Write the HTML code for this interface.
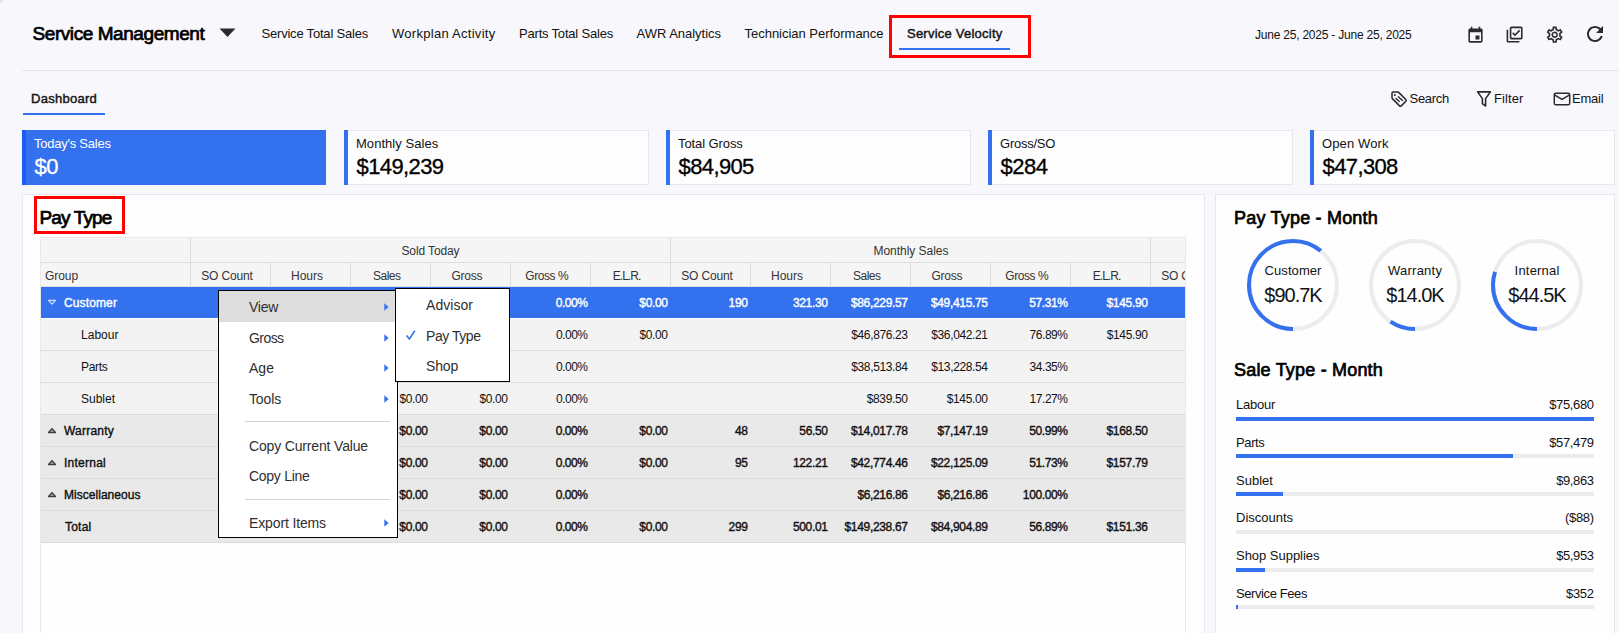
<!DOCTYPE html><html><head><meta charset="utf-8"><title>Service Velocity</title><style>
html,body{margin:0;padding:0}body{width:1619px;height:633px;overflow:hidden;position:relative;background:#f7f7fc;font-family:"Liberation Sans",sans-serif;color:#121212}
div,span,svg{position:absolute;box-sizing:border-box}.t{white-space:nowrap;line-height:1}
</style></head><body>
<div style="left:0px;top:0px;width:8px;height:8px;background:#e4e4ea;"></div>
<div style="left:0px;top:0px;width:9px;height:9px;background:#f7f7fc;border-top-left-radius:6px;"></div>
<span class="t" style="left:32.5px;top:23.85px;font-size:19px;-webkit-text-stroke:0.72px;color:#000;letter-spacing:-0.43px;">Service Management</span>
<svg style="left:219px;top:28px" width="17" height="10" viewBox="0 0 17 10"><path d="M0.5 0.5h16L8.5 9z" fill="#2b2b2b"/></svg>
<span class="t" style="left:261.5px;top:26.95px;font-size:13px;letter-spacing:-0.201px;">Service Total Sales</span>
<span class="t" style="left:392px;top:26.95px;font-size:13px;letter-spacing:0.279px;">Workplan Activity</span>
<span class="t" style="left:519px;top:26.95px;font-size:13px;letter-spacing:-0.195px;">Parts Total Sales</span>
<span class="t" style="left:636.5px;top:26.95px;font-size:13px;letter-spacing:-0.02px;">AWR Analytics</span>
<span class="t" style="left:744.5px;top:26.95px;font-size:13px;letter-spacing:-0.021px;">Technician Performance</span>
<span class="t" style="left:907px;top:26.95px;font-size:13px;-webkit-text-stroke:0.42px;letter-spacing:0.233px;">Service Velocity</span>
<div style="left:899px;top:48px;width:111px;height:2px;background:#3471ee;"></div>
<div style="left:889px;top:15px;width:142px;height:43px;background:transparent;border:3px solid #ff0000;"></div>
<span class="t" style="left:1255px;top:28.8px;font-size:12px;letter-spacing:-0.217px;">June 25, 2025 - June 25, 2025</span>
<svg style="left:1465.600px;top:25.500px" width="19" height="19" viewBox="0 0 24 24"><path fill="#2b2b2b" d="M17 12h-5v5h5v-5zM16 1v2H8V1H6v2H5c-1.11 0-1.99.9-1.99 2L3 19c0 1.1.89 2 2 2h14c1.1 0 2-.9 2-2V5c0-1.1-.9-2-2-2h-1V1h-2zm3 18H5V8h14v11z"/></svg>
<svg style="left:1505.400px;top:24.700px" width="19.200" height="19.200" viewBox="0 0 24 24"><path fill="#2b2b2b" d="M20 4v12H8V4h12m0-2H8c-1.1 0-2 .9-2 2v12c0 1.1.9 2 2 2h12c1.1 0 2-.9 2-2V4c0-1.1-.9-2-2-2zm-7.530 12L9 10.500l1.400-1.410 2.070 2.080L17.600 6 19 7.410 12.470 14zM4 6H2v14c0 1.100.9 2 2 2h14v-2H4V6z"/></svg>
<svg style="left:1545.400px;top:24.500px" width="19.400" height="19.400" viewBox="0 0 24 24"><path fill="#2b2b2b" d="M19.43 12.98c.04-.32.07-.64.07-.98 0-.34-.03-.66-.07-.98l2.11-1.65c.19-.15.24-.42.12-.64l-2-3.46c-.09-.16-.26-.25-.44-.25-.06 0-.12.01-.17.03l-2.49 1c-.52-.4-1.08-.73-1.69-.98l-.38-2.65C14.46 2.18 14.25 2 14 2h-4c-.25 0-.46.18-.49.42l-.38 2.65c-.61.25-1.170.59-1.69.98l-2.49-1c-.06-.02-.12-.03-.18-.03-.17 0-.34.09-.43.25l-2 3.46c-.13.22-.07.49.12.64l2.11 1.65c-.04.32-.07.65-.07.98 0 .33.03.66.07.98l-2.11 1.65c-.19.15-.24.42-.12.64l2 3.46c.09.16.26.25.44.25.06 0 .12-.01.17-.03l2.49-1c.52.4 1.080.73 1.69.98l.38 2.65c.03.24.24.42.49.42h4c.25 0 .46-.18.49-.42l.38-2.65c.61-.25 1.170-.59 1.69-.98l2.49 1c.06.02.12.03.18.03.17 0 .34-.09.43-.25l2-3.46c.12-.22.07-.49-.12-.64l-2.11-1.65zm-1.98-1.710c.04.31.05.52.05.73 0 .21-.02.43-.05.73l-.14 1.130.89.7 1.080.84-.7 1.210-1.270-.51-1.040-.42-.9.68c-.43.32-.84.56-1.250.73l-1.060.43-.16 1.130-.2 1.350h-1.400l-.19-1.350-.16-1.130-1.060-.43c-.43-.18-.83-.41-1.230-.71l-.91-.7-1.060.43-1.270.51-.7-1.210 1.080-.84.89-.7-.14-1.130c-.03-.31-.05-.54-.05-.74s.02-.43.05-.73l.14-1.130-.89-.7-1.080-.84.7-1.210 1.270.51 1.040.42.9-.68c.43-.32.84-.56 1.250-.73l1.060-.43.16-1.130.2-1.350h1.390l.19 1.350.16 1.130 1.060.43c.43.18.83.41 1.230.71l.91.7 1.060-.43 1.270-.51.7 1.210-1.070.85-.89.7.14 1.130zM12 8c-2.210 0-4 1.790-4 4s1.790 4 4 4 4-1.790 4-4-1.790-4-4-4zm0 6c-1.100 0-2-.9-2-2s.9-2 2-2 2 .9 2 2-.9 2-2 2z"/></svg>
<svg style="left:1583px;top:22px" width="24" height="24" viewBox="0 0 24 24"><path fill="#2b2b2b" d="M17.65 6.35C16.2 4.9 14.21 4 12 4c-4.42 0-7.990 3.580-7.990 8s3.570 8 7.990 8c3.730 0 6.840-2.550 7.730-6h-2.080c-.82 2.330-3.040 4-5.650 4-3.310 0-6-2.690-6-6s2.690-6 6-6c1.660 0 3.140.69 4.220 1.780L13 11h7V4l-2.350 2.350z"/></svg>
<div style="left:22px;top:70px;width:1597px;height:1px;background:#e4e4ec;"></div>
<span class="t" style="left:31px;top:91.95px;font-size:13px;-webkit-text-stroke:0.42px;letter-spacing:0.266px;">Dashboard</span>
<div style="left:23px;top:113px;width:82px;height:2px;background:#3471ee;"></div>
<svg style="left:1390.4px;top:89.800px" width="18" height="18" viewBox="0 0 18 18"><path d="M2 3.2a1.200 1.200 0 0 1 1.200-1.200h4.600a1.200 1.200 0 0 1 .85.35l7.200 7.200a1.200 1.200 0 0 1 0 1.700l-4.600 4.600a1.200 1.200 0 0 1-1.700 0l-7.200-7.200A1.200 1.200 0 0 1 2 7.800z" fill="none" stroke="#2b2b2b" stroke-width="1.500"/><circle cx="4.800" cy="4.900" r="1" fill="#2b2b2b"/><path d="M6 8.500l3.200 3M8.300 6.700l4.200 3.800" stroke="#2b2b2b" stroke-width="1.300" stroke-linecap="round"/></svg>
<span class="t" style="left:1409.5px;top:91.95px;font-size:13px;letter-spacing:-0.284px;">Search</span>
<svg style="left:1476px;top:90px" width="16" height="18" viewBox="0 0 16 18"><path d="M1.600 1.900h12.800L9.600 8.600v7.400L6.400 13.600V8.600z" fill="none" stroke="#2b2b2b" stroke-width="1.600" stroke-linejoin="round"/></svg>
<span class="t" style="left:1494px;top:91.95px;font-size:13px;letter-spacing:0.102px;">Filter</span>
<svg style="left:1553px;top:92px" width="18" height="14" viewBox="0 0 18 14"><rect x="1.300" y="1.200" width="15.400" height="11.600" rx="1.600" fill="none" stroke="#2b2b2b" stroke-width="1.500"/><path d="M1.800 3.200l7.200 4.300 7.200-4.300" fill="none" stroke="#2b2b2b" stroke-width="1.500"/></svg>
<span class="t" style="left:1572px;top:91.95px;font-size:13px;letter-spacing:-0.203px;">Email</span>
<div style="left:22px;top:130px;width:304px;height:55px;background:#3471ee;"></div>
<div style="left:22px;top:130px;width:4px;height:55px;background:#1c5cf2;"></div>
<span class="t" style="left:34px;top:136.95px;font-size:13px;color:#ffffff;letter-spacing:-0.239px;">Today's Sales</span>
<span class="t" style="left:34.6px;top:156.3px;font-size:22px;-webkit-text-stroke:0.31px;color:#ffffff;letter-spacing:-0.516px;">$0</span>
<div style="left:344px;top:130px;width:305px;height:55px;background:#fdfdfe;border:1px solid #e7e7ef;"></div>
<div style="left:344px;top:130px;width:4px;height:55px;background:#3471ee;"></div>
<span class="t" style="left:356px;top:136.95px;font-size:13px;letter-spacing:0.042px;">Monthly Sales</span>
<span class="t" style="left:356.6px;top:156.3px;font-size:22px;-webkit-text-stroke:0.31px;color:#000000;letter-spacing:-0.614px;">$149,239</span>
<div style="left:666px;top:130px;width:305px;height:55px;background:#fdfdfe;border:1px solid #e7e7ef;"></div>
<div style="left:666px;top:130px;width:4px;height:55px;background:#3471ee;"></div>
<span class="t" style="left:678px;top:136.95px;font-size:13px;letter-spacing:-0.095px;">Total Gross</span>
<span class="t" style="left:678.6px;top:156.3px;font-size:22px;-webkit-text-stroke:0.31px;color:#000000;letter-spacing:-0.629px;">$84,905</span>
<div style="left:988px;top:130px;width:305px;height:55px;background:#fdfdfe;border:1px solid #e7e7ef;"></div>
<div style="left:988px;top:130px;width:4px;height:55px;background:#3471ee;"></div>
<span class="t" style="left:1000px;top:136.95px;font-size:13px;letter-spacing:-0.235px;">Gross/SO</span>
<span class="t" style="left:1000.6px;top:156.3px;font-size:22px;-webkit-text-stroke:0.31px;color:#000000;letter-spacing:-0.512px;">$284</span>
<div style="left:1310px;top:130px;width:305px;height:55px;background:#fdfdfe;border:1px solid #e7e7ef;"></div>
<div style="left:1310px;top:130px;width:4px;height:55px;background:#3471ee;"></div>
<span class="t" style="left:1322px;top:136.95px;font-size:13px;letter-spacing:0.132px;">Open Work</span>
<span class="t" style="left:1322.6px;top:156.3px;font-size:22px;-webkit-text-stroke:0.31px;color:#000000;letter-spacing:-0.629px;">$47,308</span>
<div style="left:22px;top:194px;width:1183px;height:460px;background:#fefefe;border:1px solid #e7e7ef;"></div>
<span class="t" style="left:39.5px;top:207.85px;font-size:19px;-webkit-text-stroke:0.72px;color:#000;letter-spacing:-0.859px;">Pay Type</span>
<div style="left:34px;top:196px;width:91px;height:38px;background:transparent;border:3px solid #ff0000;"></div>
<div style="left:40px;top:237px;width:1146px;height:420px;background:#fefefe;border:1px solid #e8e8e8;"></div>
<div style="left:41px;top:238px;width:1144px;height:49px;background:#f5f5f5;"></div>
<div style="left:41px;top:262px;width:1144px;height:1px;background:#dddddd;"></div>
<div style="left:41px;top:286px;width:1144px;height:1px;background:#dddddd;"></div>
<div style="left:190px;top:238px;width:1px;height:49px;background:#dddddd;"></div>
<div style="left:670px;top:238px;width:1px;height:49px;background:#dddddd;"></div>
<div style="left:1150px;top:238px;width:1px;height:49px;background:#dddddd;"></div>
<div style="left:270px;top:263px;width:1px;height:24px;background:#dddddd;"></div>
<div style="left:350px;top:263px;width:1px;height:24px;background:#dddddd;"></div>
<div style="left:430px;top:263px;width:1px;height:24px;background:#dddddd;"></div>
<div style="left:510px;top:263px;width:1px;height:24px;background:#dddddd;"></div>
<div style="left:590px;top:263px;width:1px;height:24px;background:#dddddd;"></div>
<div style="left:750px;top:263px;width:1px;height:24px;background:#dddddd;"></div>
<div style="left:830px;top:263px;width:1px;height:24px;background:#dddddd;"></div>
<div style="left:910px;top:263px;width:1px;height:24px;background:#dddddd;"></div>
<div style="left:990px;top:263px;width:1px;height:24px;background:#dddddd;"></div>
<div style="left:1070px;top:263px;width:1px;height:24px;background:#dddddd;"></div>
<span class="t" style="left:401.44px;top:244.8px;font-size:12px;color:#333333;letter-spacing:-0.116px;">Sold Today</span>
<span class="t" style="left:873.49px;top:244.8px;font-size:12px;color:#333333;letter-spacing:-0.029px;">Monthly Sales</span>
<span class="t" style="left:45px;top:269.8px;font-size:12px;color:#333333;letter-spacing:-0.072px;">Group</span>
<span class="t" style="left:201.18px;top:269.8px;font-size:12px;color:#333333;letter-spacing:-0.15px;">SO Count</span>
<span class="t" style="left:291.0px;top:269.8px;font-size:12px;color:#333333;letter-spacing:-0.003px;">Hours</span>
<span class="t" style="left:373.0px;top:269.8px;font-size:12px;color:#333333;letter-spacing:-0.506px;">Sales</span>
<span class="t" style="left:451.6px;top:269.8px;font-size:12px;color:#333333;letter-spacing:-0.303px;">Gross</span>
<span class="t" style="left:525.28px;top:269.8px;font-size:12px;color:#333333;letter-spacing:-0.431px;">Gross %</span>
<span class="t" style="left:612.76px;top:269.8px;font-size:12px;color:#333333;letter-spacing:-0.977px;">E.L.R.</span>
<span class="t" style="left:681.17px;top:269.8px;font-size:12px;color:#333333;letter-spacing:-0.15px;">SO Count</span>
<span class="t" style="left:771.0px;top:269.8px;font-size:12px;color:#333333;letter-spacing:-0.003px;">Hours</span>
<span class="t" style="left:853.0px;top:269.8px;font-size:12px;color:#333333;letter-spacing:-0.506px;">Sales</span>
<span class="t" style="left:931.6px;top:269.8px;font-size:12px;color:#333333;letter-spacing:-0.303px;">Gross</span>
<span class="t" style="left:1005.28px;top:269.8px;font-size:12px;color:#333333;letter-spacing:-0.431px;">Gross %</span>
<span class="t" style="left:1092.76px;top:269.8px;font-size:12px;color:#333333;letter-spacing:-0.977px;">E.L.R.</span>
<div style="left:1151px;top:263px;width:34px;height:23px;overflow:hidden"><span style="white-space:nowrap;line-height:1;left:10.200px;top:6.800px;font-size:12px;color:#333;letter-spacing:-0.2px">SO Count</span></div>
<div style="left:41px;top:287px;width:1144px;height:31px;background:#3471ee;"></div>
<svg style="left:47px;top:299px" width="10" height="7" viewBox="0 0 10 7"><path d="M1.500 1.300h7L5 5.200z" fill="none" stroke="#d3e0fc" stroke-width="1.250" stroke-linejoin="round"/></svg>
<span class="t" style="left:64px;top:296.8px;font-size:12px;-webkit-text-stroke:0.38px;color:#ffffff;letter-spacing:0.123px;">Customer</span>
<span class="t" style="left:555.7px;top:296.8px;font-size:12px;-webkit-text-stroke:0.38px;color:#ffffff;letter-spacing:-0.432px;">0.00%</span>
<span class="t" style="left:639.31px;top:296.8px;font-size:12px;-webkit-text-stroke:0.38px;color:#ffffff;letter-spacing:-0.335px;">$0.00</span>
<span class="t" style="left:728.44px;top:296.8px;font-size:12px;-webkit-text-stroke:0.38px;color:#ffffff;letter-spacing:-0.233px;">190</span>
<span class="t" style="left:792.88px;top:296.8px;font-size:12px;-webkit-text-stroke:0.38px;color:#ffffff;letter-spacing:-0.317px;">321.30</span>
<span class="t" style="left:850.95px;top:296.8px;font-size:12px;-webkit-text-stroke:0.38px;color:#ffffff;letter-spacing:-0.335px;">$86,229.57</span>
<span class="t" style="left:930.95px;top:296.8px;font-size:12px;-webkit-text-stroke:0.38px;color:#ffffff;letter-spacing:-0.335px;">$49,415.75</span>
<span class="t" style="left:1029.29px;top:296.8px;font-size:12px;-webkit-text-stroke:0.38px;color:#ffffff;letter-spacing:-0.398px;">57.31%</span>
<span class="t" style="left:1106.45px;top:296.8px;font-size:12px;-webkit-text-stroke:0.38px;color:#ffffff;letter-spacing:-0.307px;">$145.90</span>
<div style="left:41px;top:319px;width:1144px;height:31px;background:#f3f3f3;"></div>
<div style="left:41px;top:350px;width:1144px;height:1px;background:#dcdcdc;"></div>
<span class="t" style="left:81px;top:328.8px;font-size:12px;color:#111111;letter-spacing:0.021px;">Labour</span>
<span class="t" style="left:555.91px;top:328.8px;font-size:12px;color:#111111;letter-spacing:-0.485px;">0.00%</span>
<span class="t" style="left:639.44px;top:328.8px;font-size:12px;color:#111111;letter-spacing:-0.369px;">$0.00</span>
<span class="t" style="left:851.25px;top:328.8px;font-size:12px;color:#111111;letter-spacing:-0.369px;">$46,876.23</span>
<span class="t" style="left:931.25px;top:328.8px;font-size:12px;color:#111111;letter-spacing:-0.369px;">$36,042.21</span>
<span class="t" style="left:1029.55px;top:328.8px;font-size:12px;color:#111111;letter-spacing:-0.45px;">76.89%</span>
<span class="t" style="left:1106.68px;top:328.8px;font-size:12px;color:#111111;letter-spacing:-0.344px;">$145.90</span>
<div style="left:41px;top:351px;width:1144px;height:31px;background:#f3f3f3;"></div>
<div style="left:41px;top:382px;width:1144px;height:1px;background:#dcdcdc;"></div>
<span class="t" style="left:81px;top:360.8px;font-size:12px;color:#111111;letter-spacing:-0.303px;">Parts</span>
<span class="t" style="left:555.91px;top:360.8px;font-size:12px;color:#111111;letter-spacing:-0.485px;">0.00%</span>
<span class="t" style="left:851.25px;top:360.8px;font-size:12px;color:#111111;letter-spacing:-0.369px;">$38,513.84</span>
<span class="t" style="left:931.25px;top:360.8px;font-size:12px;color:#111111;letter-spacing:-0.369px;">$13,228.54</span>
<span class="t" style="left:1029.55px;top:360.8px;font-size:12px;color:#111111;letter-spacing:-0.45px;">34.35%</span>
<div style="left:41px;top:383px;width:1144px;height:31px;background:#f3f3f3;"></div>
<div style="left:41px;top:414px;width:1144px;height:1px;background:#dcdcdc;"></div>
<span class="t" style="left:81px;top:392.8px;font-size:12px;color:#111111;letter-spacing:-0.005px;">Sublet</span>
<span class="t" style="left:399.44px;top:392.8px;font-size:12px;color:#111111;letter-spacing:-0.369px;">$0.00</span>
<span class="t" style="left:479.44px;top:392.8px;font-size:12px;color:#111111;letter-spacing:-0.369px;">$0.00</span>
<span class="t" style="left:555.91px;top:392.8px;font-size:12px;color:#111111;letter-spacing:-0.485px;">0.00%</span>
<span class="t" style="left:866.68px;top:392.8px;font-size:12px;color:#111111;letter-spacing:-0.344px;">$839.50</span>
<span class="t" style="left:946.68px;top:392.8px;font-size:12px;color:#111111;letter-spacing:-0.344px;">$145.00</span>
<span class="t" style="left:1029.55px;top:392.8px;font-size:12px;color:#111111;letter-spacing:-0.45px;">17.27%</span>
<div style="left:41px;top:415px;width:1144px;height:31px;background:#e9e9e9;"></div>
<div style="left:41px;top:446px;width:1144px;height:1px;background:#dcdcdc;"></div>
<svg style="left:47px;top:427px" width="10" height="7" viewBox="0 0 10 7"><path d="M1.500 5.500h7L5 1.600z" fill="#9a9a9a" stroke="#3a3a3a" stroke-width="1.250" stroke-linejoin="round"/></svg>
<span class="t" style="left:64px;top:424.8px;font-size:12px;-webkit-text-stroke:0.38px;color:#111111;letter-spacing:0.221px;">Warranty</span>
<span class="t" style="left:399.31px;top:424.8px;font-size:12px;-webkit-text-stroke:0.38px;color:#111111;letter-spacing:-0.335px;">$0.00</span>
<span class="t" style="left:479.31px;top:424.8px;font-size:12px;-webkit-text-stroke:0.38px;color:#111111;letter-spacing:-0.335px;">$0.00</span>
<span class="t" style="left:555.7px;top:424.8px;font-size:12px;-webkit-text-stroke:0.38px;color:#111111;letter-spacing:-0.432px;">0.00%</span>
<span class="t" style="left:639.31px;top:424.8px;font-size:12px;-webkit-text-stroke:0.38px;color:#111111;letter-spacing:-0.335px;">$0.00</span>
<span class="t" style="left:734.88px;top:424.8px;font-size:12px;-webkit-text-stroke:0.38px;color:#111111;letter-spacing:-0.236px;">48</span>
<span class="t" style="left:799.31px;top:424.8px;font-size:12px;-webkit-text-stroke:0.38px;color:#111111;letter-spacing:-0.335px;">56.50</span>
<span class="t" style="left:850.95px;top:424.8px;font-size:12px;-webkit-text-stroke:0.38px;color:#111111;letter-spacing:-0.335px;">$14,017.78</span>
<span class="t" style="left:937.38px;top:424.8px;font-size:12px;-webkit-text-stroke:0.38px;color:#111111;letter-spacing:-0.347px;">$7,147.19</span>
<span class="t" style="left:1029.29px;top:424.8px;font-size:12px;-webkit-text-stroke:0.38px;color:#111111;letter-spacing:-0.398px;">50.99%</span>
<span class="t" style="left:1106.45px;top:424.8px;font-size:12px;-webkit-text-stroke:0.38px;color:#111111;letter-spacing:-0.307px;">$168.50</span>
<div style="left:41px;top:447px;width:1144px;height:31px;background:#e9e9e9;"></div>
<div style="left:41px;top:478px;width:1144px;height:1px;background:#dcdcdc;"></div>
<svg style="left:47px;top:459px" width="10" height="7" viewBox="0 0 10 7"><path d="M1.500 5.500h7L5 1.600z" fill="#9a9a9a" stroke="#3a3a3a" stroke-width="1.250" stroke-linejoin="round"/></svg>
<span class="t" style="left:64px;top:456.8px;font-size:12px;-webkit-text-stroke:0.38px;color:#111111;letter-spacing:0.246px;">Internal</span>
<span class="t" style="left:399.31px;top:456.8px;font-size:12px;-webkit-text-stroke:0.38px;color:#111111;letter-spacing:-0.335px;">$0.00</span>
<span class="t" style="left:479.31px;top:456.8px;font-size:12px;-webkit-text-stroke:0.38px;color:#111111;letter-spacing:-0.335px;">$0.00</span>
<span class="t" style="left:555.7px;top:456.8px;font-size:12px;-webkit-text-stroke:0.38px;color:#111111;letter-spacing:-0.432px;">0.00%</span>
<span class="t" style="left:639.31px;top:456.8px;font-size:12px;-webkit-text-stroke:0.38px;color:#111111;letter-spacing:-0.335px;">$0.00</span>
<span class="t" style="left:734.88px;top:456.8px;font-size:12px;-webkit-text-stroke:0.38px;color:#111111;letter-spacing:-0.236px;">95</span>
<span class="t" style="left:792.88px;top:456.8px;font-size:12px;-webkit-text-stroke:0.38px;color:#111111;letter-spacing:-0.317px;">122.21</span>
<span class="t" style="left:850.95px;top:456.8px;font-size:12px;-webkit-text-stroke:0.38px;color:#111111;letter-spacing:-0.335px;">$42,774.46</span>
<span class="t" style="left:930.95px;top:456.8px;font-size:12px;-webkit-text-stroke:0.38px;color:#111111;letter-spacing:-0.335px;">$22,125.09</span>
<span class="t" style="left:1029.29px;top:456.8px;font-size:12px;-webkit-text-stroke:0.38px;color:#111111;letter-spacing:-0.398px;">51.73%</span>
<span class="t" style="left:1106.45px;top:456.8px;font-size:12px;-webkit-text-stroke:0.38px;color:#111111;letter-spacing:-0.307px;">$157.79</span>
<div style="left:41px;top:479px;width:1144px;height:31px;background:#e9e9e9;"></div>
<div style="left:41px;top:510px;width:1144px;height:1px;background:#dcdcdc;"></div>
<svg style="left:47px;top:491px" width="10" height="7" viewBox="0 0 10 7"><path d="M1.500 5.500h7L5 1.600z" fill="#9a9a9a" stroke="#3a3a3a" stroke-width="1.250" stroke-linejoin="round"/></svg>
<span class="t" style="left:64px;top:488.8px;font-size:12px;-webkit-text-stroke:0.38px;color:#111111;letter-spacing:0.035px;">Miscellaneous</span>
<span class="t" style="left:399.31px;top:488.8px;font-size:12px;-webkit-text-stroke:0.38px;color:#111111;letter-spacing:-0.335px;">$0.00</span>
<span class="t" style="left:479.31px;top:488.8px;font-size:12px;-webkit-text-stroke:0.38px;color:#111111;letter-spacing:-0.335px;">$0.00</span>
<span class="t" style="left:555.7px;top:488.8px;font-size:12px;-webkit-text-stroke:0.38px;color:#111111;letter-spacing:-0.432px;">0.00%</span>
<span class="t" style="left:857.38px;top:488.8px;font-size:12px;-webkit-text-stroke:0.38px;color:#111111;letter-spacing:-0.347px;">$6,216.86</span>
<span class="t" style="left:937.38px;top:488.8px;font-size:12px;-webkit-text-stroke:0.38px;color:#111111;letter-spacing:-0.347px;">$6,216.86</span>
<span class="t" style="left:1022.87px;top:488.8px;font-size:12px;-webkit-text-stroke:0.38px;color:#111111;letter-spacing:-0.374px;">100.00%</span>
<div style="left:41px;top:511px;width:1144px;height:31px;background:#e9e9e9;"></div>
<div style="left:41px;top:542px;width:1144px;height:1px;background:#dcdcdc;"></div>
<span class="t" style="left:65px;top:520.8px;font-size:12px;-webkit-text-stroke:0.38px;color:#111111;letter-spacing:0.208px;">Total</span>
<span class="t" style="left:399.31px;top:520.8px;font-size:12px;-webkit-text-stroke:0.38px;color:#111111;letter-spacing:-0.335px;">$0.00</span>
<span class="t" style="left:479.31px;top:520.8px;font-size:12px;-webkit-text-stroke:0.38px;color:#111111;letter-spacing:-0.335px;">$0.00</span>
<span class="t" style="left:555.7px;top:520.8px;font-size:12px;-webkit-text-stroke:0.38px;color:#111111;letter-spacing:-0.432px;">0.00%</span>
<span class="t" style="left:639.31px;top:520.8px;font-size:12px;-webkit-text-stroke:0.38px;color:#111111;letter-spacing:-0.335px;">$0.00</span>
<span class="t" style="left:728.44px;top:520.8px;font-size:12px;-webkit-text-stroke:0.38px;color:#111111;letter-spacing:-0.233px;">299</span>
<span class="t" style="left:792.88px;top:520.8px;font-size:12px;-webkit-text-stroke:0.38px;color:#111111;letter-spacing:-0.317px;">500.01</span>
<span class="t" style="left:844.52px;top:520.8px;font-size:12px;-webkit-text-stroke:0.38px;color:#111111;letter-spacing:-0.325px;">$149,238.67</span>
<span class="t" style="left:930.95px;top:520.8px;font-size:12px;-webkit-text-stroke:0.38px;color:#111111;letter-spacing:-0.335px;">$84,904.89</span>
<span class="t" style="left:1029.29px;top:520.8px;font-size:12px;-webkit-text-stroke:0.38px;color:#111111;letter-spacing:-0.398px;">56.89%</span>
<span class="t" style="left:1106.45px;top:520.8px;font-size:12px;-webkit-text-stroke:0.38px;color:#111111;letter-spacing:-0.307px;">$151.36</span>
<div style="left:218px;top:290px;width:180px;height:248px;background:#ffffff;border:1px solid #000;"></div>
<div style="left:219px;top:291px;width:178px;height:31px;background:#dddddd;"></div>
<span class="t" style="left:249px;top:300.1px;font-size:14px;color:#2f2f2f;letter-spacing:-0.273px;">View</span>
<svg style="left:383.500px;top:302.5px" width="5" height="8" viewBox="0 0 5 8"><path d="M0.300 0.200L4.600 4 0.300 7.800z" fill="#3471ee"/></svg>
<span class="t" style="left:249px;top:331.1px;font-size:14px;color:#2f2f2f;letter-spacing:-0.569px;">Gross</span>
<svg style="left:383.500px;top:333.5px" width="5" height="8" viewBox="0 0 5 8"><path d="M0.300 0.200L4.600 4 0.300 7.800z" fill="#3471ee"/></svg>
<span class="t" style="left:249px;top:361.1px;font-size:14px;color:#2f2f2f;letter-spacing:0.026px;">Age</span>
<svg style="left:383.500px;top:363.5px" width="5" height="8" viewBox="0 0 5 8"><path d="M0.300 0.200L4.600 4 0.300 7.800z" fill="#3471ee"/></svg>
<span class="t" style="left:249px;top:392.1px;font-size:14px;color:#2f2f2f;letter-spacing:-0.138px;">Tools</span>
<svg style="left:383.500px;top:394.5px" width="5" height="8" viewBox="0 0 5 8"><path d="M0.300 0.200L4.600 4 0.300 7.800z" fill="#3471ee"/></svg>
<span class="t" style="left:249px;top:439.1px;font-size:14px;color:#2f2f2f;letter-spacing:-0.162px;">Copy Current Value</span>
<span class="t" style="left:249px;top:469.1px;font-size:14px;color:#2f2f2f;letter-spacing:-0.283px;">Copy Line</span>
<span class="t" style="left:249px;top:516.1px;font-size:14px;color:#2f2f2f;letter-spacing:-0.133px;">Export Items</span>
<svg style="left:383.500px;top:518.5px" width="5" height="8" viewBox="0 0 5 8"><path d="M0.300 0.200L4.600 4 0.300 7.800z" fill="#3471ee"/></svg>
<div style="left:245px;top:421px;width:145px;height:1px;background:#d4d4d4;"></div>
<div style="left:245px;top:499px;width:145px;height:1px;background:#d4d4d4;"></div>
<div style="left:395px;top:288px;width:115px;height:94px;background:#ffffff;border:1px solid #000;"></div>
<span class="t" style="left:426px;top:298.1px;font-size:14px;color:#2f2f2f;letter-spacing:0.045px;">Advisor</span>
<span class="t" style="left:426px;top:329.1px;font-size:14px;color:#2f2f2f;letter-spacing:-0.453px;">Pay Type</span>
<span class="t" style="left:426px;top:359.1px;font-size:14px;color:#2f2f2f;letter-spacing:-0.176px;">Shop</span>
<svg style="left:405px;top:329px" width="12" height="12" viewBox="0 0 12 12"><path d="M1.600 6.600l2.700 3.400L9.900 1.800" fill="none" stroke="#3471ee" stroke-width="1.600"/></svg>
<div style="left:1215px;top:194px;width:400px;height:460px;background:#fefefe;border:1px solid #e7e7ef;"></div>
<span class="t" style="left:1234px;top:208.7px;font-size:18px;-webkit-text-stroke:0.68px;color:#000;letter-spacing:0.203px;">Pay Type - Month</span>
<svg style="left:1245px;top:237px" width="96" height="96" viewBox="-48 -48 96 96"><circle r="44" fill="none" stroke="#ececec" stroke-width="4"/><circle r="44" fill="none" stroke="#3471ee" stroke-width="4" stroke-dasharray="168.06 276.46" transform="rotate(90)"/></svg>
<span class="t" style="left:1264.54px;top:263.95px;font-size:13px;letter-spacing:0.08px;">Customer</span>
<span class="t" style="left:1264.3px;top:285.0px;font-size:20px;letter-spacing:-0.998px;">$90.7K</span>
<svg style="left:1367px;top:237px" width="96" height="96" viewBox="-48 -48 96 96"><circle r="44" fill="none" stroke="#ececec" stroke-width="4"/><circle r="44" fill="none" stroke="#3471ee" stroke-width="4" stroke-dasharray="25.94 276.46" transform="rotate(90)"/></svg>
<span class="t" style="left:1388.11px;top:263.95px;font-size:13px;letter-spacing:0.219px;">Warranty</span>
<span class="t" style="left:1386.3px;top:285.0px;font-size:20px;letter-spacing:-0.998px;">$14.0K</span>
<svg style="left:1489px;top:237px" width="96" height="96" viewBox="-48 -48 96 96"><circle r="44" fill="none" stroke="#ececec" stroke-width="4"/><circle r="44" fill="none" stroke="#3471ee" stroke-width="4" stroke-dasharray="82.46 276.46" transform="rotate(90)"/></svg>
<span class="t" style="left:1514.6px;top:263.95px;font-size:13px;letter-spacing:0.203px;">Internal</span>
<span class="t" style="left:1508.3px;top:285.0px;font-size:20px;letter-spacing:-0.998px;">$44.5K</span>
<span class="t" style="left:1234px;top:360.7px;font-size:18px;-webkit-text-stroke:0.68px;color:#000;letter-spacing:0.191px;">Sale Type - Month</span>
<span class="t" style="left:1236px;top:397.95px;font-size:13px;letter-spacing:-0.247px;">Labour</span>
<span class="t" style="left:1549.23px;top:397.95px;font-size:13px;letter-spacing:-0.372px;">$75,680</span>
<div style="left:1236px;top:417px;width:358px;height:4px;background:#ececec;"></div>
<div style="left:1236px;top:417px;width:358px;height:4px;background:#3471ee;"></div>
<span class="t" style="left:1236px;top:435.95px;font-size:13px;letter-spacing:-0.369px;">Parts</span>
<span class="t" style="left:1549.23px;top:435.95px;font-size:13px;letter-spacing:-0.372px;">$57,479</span>
<div style="left:1236px;top:454px;width:358px;height:4px;background:#ececec;"></div>
<div style="left:1236px;top:454px;width:277px;height:4px;background:#3471ee;"></div>
<span class="t" style="left:1236px;top:473.95px;font-size:13px;letter-spacing:0.021px;">Sublet</span>
<span class="t" style="left:1556.15px;top:473.95px;font-size:13px;letter-spacing:-0.383px;">$9,863</span>
<div style="left:1236px;top:492px;width:358px;height:4px;background:#ececec;"></div>
<div style="left:1236px;top:492px;width:47px;height:4px;background:#3471ee;"></div>
<span class="t" style="left:1236px;top:510.95px;font-size:13px;letter-spacing:-0.009px;">Discounts</span>
<span class="t" style="left:1565.02px;top:510.95px;font-size:13px;letter-spacing:-0.344px;">($88)</span>
<div style="left:1236px;top:530px;width:358px;height:4px;background:#ececec;"></div>
<span class="t" style="left:1236px;top:548.95px;font-size:13px;letter-spacing:-0.026px;">Shop Supplies</span>
<span class="t" style="left:1556.15px;top:548.95px;font-size:13px;letter-spacing:-0.383px;">$5,953</span>
<div style="left:1236px;top:568px;width:358px;height:4px;background:#ececec;"></div>
<div style="left:1236px;top:568px;width:29px;height:4px;background:#3471ee;"></div>
<span class="t" style="left:1236px;top:586.95px;font-size:13px;letter-spacing:-0.406px;">Service Fees</span>
<span class="t" style="left:1565.98px;top:586.95px;font-size:13px;letter-spacing:-0.301px;">$352</span>
<div style="left:1236px;top:605px;width:358px;height:4px;background:#ececec;"></div>
<div style="left:1236px;top:605px;width:2px;height:4px;background:#3471ee;"></div>
</body></html>
